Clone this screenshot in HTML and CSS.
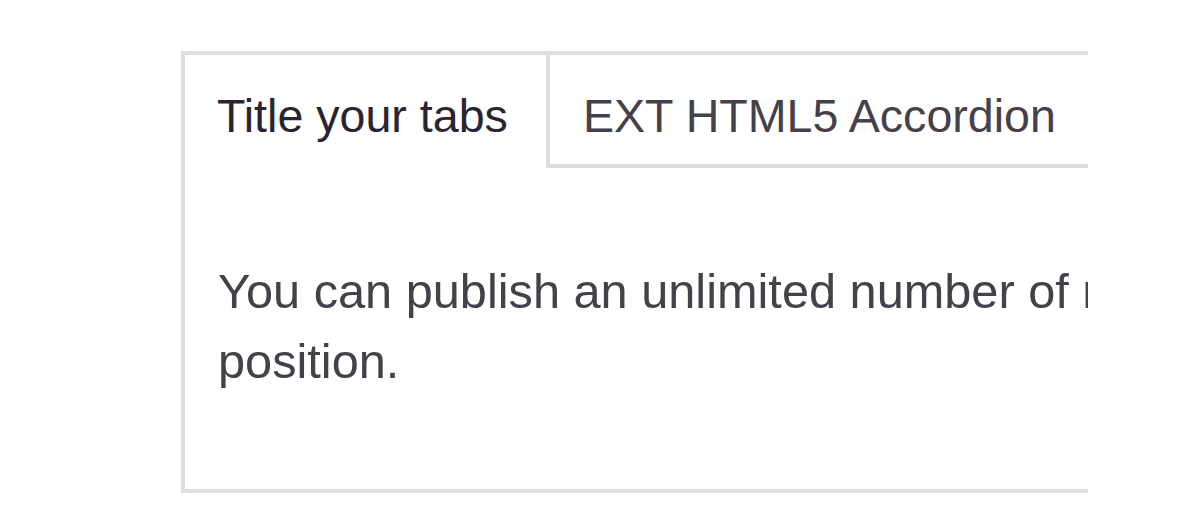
FILE: index.html
```html
<!DOCTYPE html>
<html lang="en">
<head>
    <meta charset="UTF-8">
    <meta name="viewport" content="width=device-width, initial-scale=1.0">
    <title>EXT HTML5 Accordion</title>
    <link rel="stylesheet" href="styles.css">
</head>
<body>
    <div class="frame">
        <div class="tabs-box">
            <div class="tab-row">
                <div class="tab active">Title your tabs</div>
                <div class="tab">EXT HTML5 Accordion</div>
                <div class="tab-fill"></div>
            </div>
            <div class="panel">
                <p>You can publish an unlimited number of modules in any position.</p>
            </div>
        </div>
    </div>
</body>
</html>
```

FILE: styles.css
```css
body {
    margin: 0;
    background: #fff;
    font-family: "Liberation Sans", Arial, sans-serif;
}
.frame {
    margin: 51px 0 0 181px;
    width: 907px;
    overflow: hidden;
}
.tabs-box {
    width: 1340px;
    border: 4px solid #dedede;
    border-right: none;
}
.tab-row {
    display: flex;
}
.tab {
    font-size: 46.6px;
    line-height: 53px;
    padding: 35px 33px 21px 33px;
    color: #454049;
    border-left: 4px solid #dedede;
    border-bottom: 4px solid #dedede;
    white-space: nowrap;
}
.tab.active {
    color: #2a2430;
    padding-left: 32px;
    padding-right: 38px;
    border-left: none;
    border-bottom-color: transparent;
}
.tab-fill {
    flex: 1;
    border-bottom: 4px solid #dedede;
}
.panel {
    padding: 88px 40px 93px 33px;
}
.panel p {
    margin: 0;
    font-size: 48.7px;
    line-height: 70px;
    color: #454049;
}
```
